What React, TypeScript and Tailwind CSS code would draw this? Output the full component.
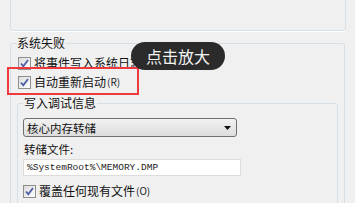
import React from "react";

const font = { fontFamily: '"Noto Sans CJK SC", "Noto Sans", sans-serif' };

function Check({ className = "" }: { className?: string }) {
  return (
    <span
      className={
        "inline-flex h-[13px] w-[13px] shrink-0 items-center justify-center border border-[#8f8f8f] bg-gradient-to-br from-[#dcdcdc] to-[#ffffff] " +
        className
      }
    >
      <svg width="11" height="11" viewBox="0 0 11 11">
        <path d="M2 5.5 L4.3 8.3 L9 2" fill="none" stroke="#4b5fa6" strokeWidth="1.8" />
      </svg>
    </span>
  );
}

function CheckRow({ label, hotkey, className = "" }: { label: string; hotkey: string; className?: string }) {
  return (
    <div className={"flex h-[14px] items-center " + className}>
      <Check />
      <span className="ml-[3px] text-[12px] leading-[14px] text-[#111]">{label}</span>
      <span className="ml-[1px] text-[10px] leading-[14px] text-[#222]">({hotkey})</span>
    </div>
  );
}

export default function App() {
  return (
    <div className="relative h-[203px] w-[355px] overflow-hidden bg-[#f0f0f0]" style={font}>
      {/* 上方分组框（只露出底部） */}
      <div className="-mt-[10px] ml-[10px] h-[41px] w-[336px] rounded-[3px] border border-[#d5dfe5] shadow-[0_1px_0_#ffffff]" />

      {/* 系统失败 */}
      <fieldset className="ml-[10px] mt-[6px] w-[335px] rounded-[3px] border border-[#d5dfe5] pb-[20px]">
        <legend className="ml-[5px] px-[1px] text-[12px] leading-[12px] text-[#111]">系统失败</legend>
        <CheckRow label="将事件写入系统日志" hotkey="W" className="ml-[7px] mt-[7px]" />
        <CheckRow label="自动重新启动" hotkey="R" className="ml-[7px] mt-[5px]" />

        {/* 写入调试信息 */}
        <fieldset className="ml-[6px] mt-[8px] w-[321px] rounded-[3px] border border-[#d5dfe5] pb-[20px]">
          <legend className="ml-[5px] px-[1px] text-[12px] leading-[12px] text-[#111]">写入调试信息</legend>
          <div className="ml-[5px] mt-[9px] flex h-[19px] w-[214px] items-center justify-between rounded-[3px] border border-[#707070] bg-gradient-to-b from-[#f2f2f2] to-[#dddddd] pl-[3px] pr-[5px]">
            <span className="text-[11.5px] leading-[14px] text-[#111]">核心内存转储</span>
            <svg width="7" height="4" viewBox="0 0 7 4">
              <path d="M0 0 H7 L3.5 4 Z" fill="#111" />
            </svg>
          </div>
          <div className="ml-[6px] mt-[5px] text-[11.5px] leading-[14px] text-[#111]">转储文件:</div>
          <div className="ml-[5px] mt-[3px] flex h-[17px] w-[218px] items-center border border-[#dcdcdc] bg-white pl-[3px]">
            <span
              className="text-[9.5px] leading-[12px] text-[#222]"
              style={{ fontFamily: '"Liberation Mono", monospace' }}
            >
              %SystemRoot%\MEMORY.DMP
            </span>
          </div>
          <CheckRow label="覆盖任何现有文件" hotkey="O" className="ml-[5px] mt-[8px]" />
        </fieldset>
      </fieldset>

      {/* 红色标注框 */}
      <div className="absolute left-[7px] top-[67px] h-[28px] w-[132px] border-2 border-[#f0393d]" />

      {/* 提示气泡 */}
      <div className="absolute left-[131px] top-[42px] flex h-[28px] w-[94px] items-center justify-center rounded-full bg-[#2b2b2b]">
        <span className="text-[16px] leading-[18px] text-[#f4f4f4]">点击放大</span>
      </div>
    </div>
  );
}
